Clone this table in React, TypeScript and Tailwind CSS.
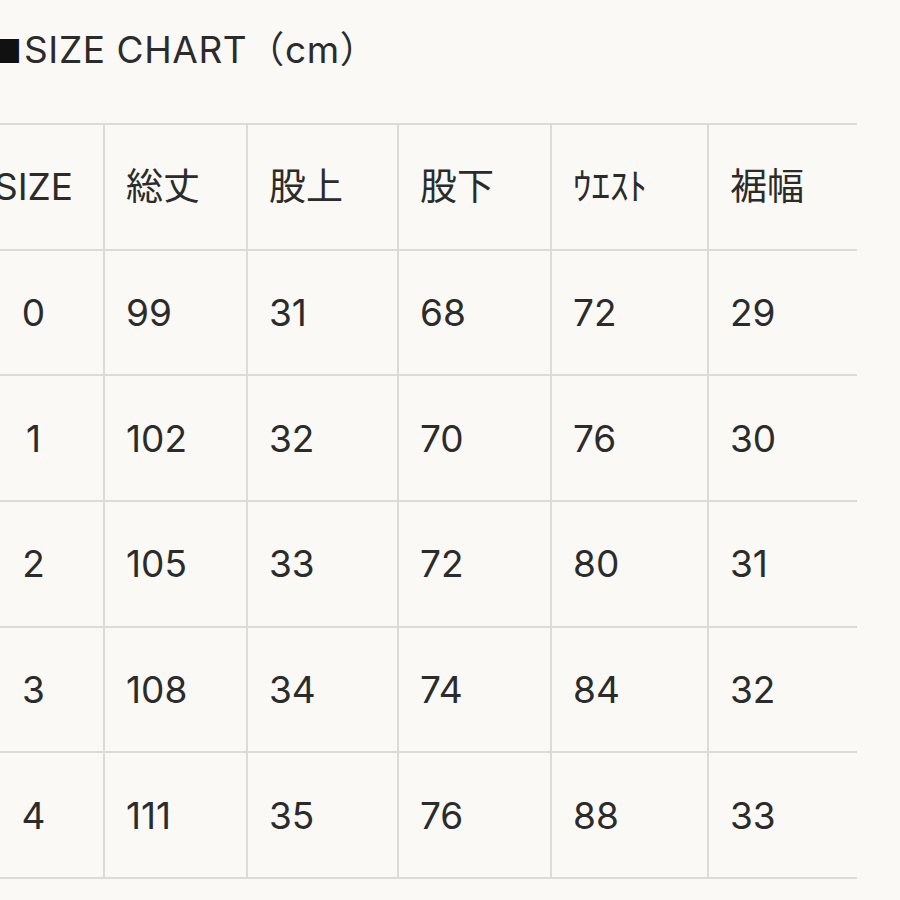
const HEAD = ["SIZE", "総丈", "股上", "股下", "ｳｴｽﾄ", "裾幅"];

const ROWS: string[][] = [
  ["0", "99", "31", "68", "72", "29"],
  ["1", "102", "32", "70", "76", "30"],
  ["2", "105", "33", "72", "80", "31"],
  ["3", "108", "34", "74", "84", "32"],
  ["4", "111", "35", "76", "88", "33"],
];

const FONT = { fontFamily: 'Inter, "Noto Sans CJK JP", sans-serif' };

function Cell({ text, first, last }: { text: string; first: boolean; last: boolean }) {
  return (
    <div
      className={
        "flex h-[125.7px] items-center border-b-[2.5px] border-[#dedbd6] text-[37px] leading-none text-[#2b2b2b] " +
        (first ? "justify-center " : "pl-[21px] ") +
        (last ? "" : "border-r-[2.5px]")
      }
    >
      {text}
    </div>
  );
}

export default function App() {
  return (
    <div className="h-[900px] w-[900px] overflow-hidden bg-[#faf9f5]" style={FONT}>
      {/* title: the square sits partly off the left edge, as in the source */}
      <div className="flex h-[123px] items-start pt-[31px] text-[37px] leading-[37px] text-[#2b2b2b]">
        <span className="-ml-[8px] mr-[2px] text-[30px] text-[#111]" style={{ fontFamily: '"Noto Sans CJK JP", sans-serif' }}>
          ■
        </span>
        <span className="tracking-[0.6px]">SIZE CHART（cm）</span>
      </div>
      <div className="-ml-[36px] grid w-[893px] grid-cols-[141px_143px_151px_153px_157px_148px] border-t-[2.5px] border-[#dedbd6]">
        {[HEAD, ...ROWS].map((row, r) =>
          row.map((v, c) => (
            <Cell key={r + "-" + c} text={v} first={c === 0} last={c === row.length - 1} />
          )),
        )}
      </div>
    </div>
  );
}
